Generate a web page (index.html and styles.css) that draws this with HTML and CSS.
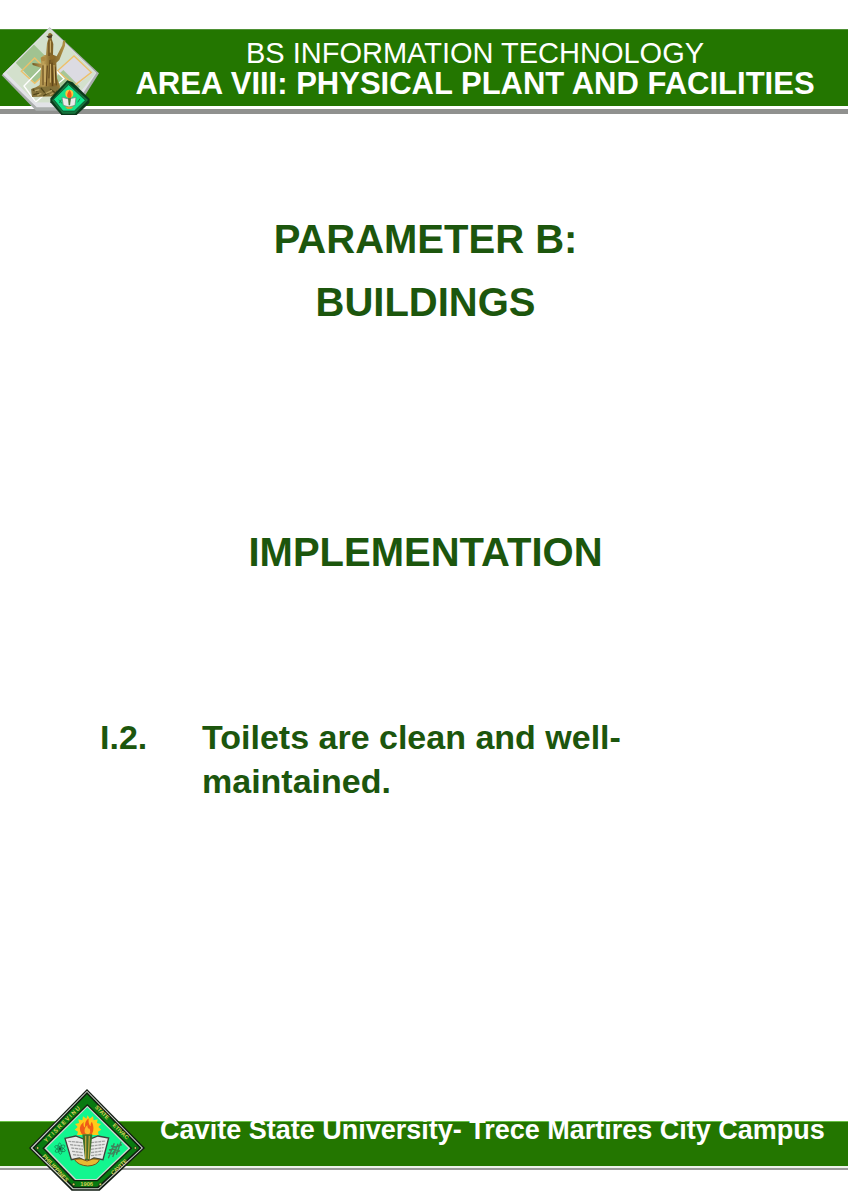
FILE: index.html
```html
<!DOCTYPE html>
<html lang="en">
<head>
<meta charset="utf-8">
<title>Area VIII: Physical Plant and Facilities</title>
<link rel="stylesheet" href="styles.css">
</head>
<body>
<div class="page">
<header class="header">
  <div class="header-band">
    <p class="program">BS INFORMATION TECHNOLOGY</p>
    <p class="area">AREA VIII: PHYSICAL PLANT AND FACILITIES</p>
  </div>
  <svg class="emblem" viewBox="0 0 330 300" role="img" aria-label="Campus monument emblem">
    <defs>
      <linearGradient id="bronze" x1="0" x2="1"><stop offset="0" stop-color="#6b521c"/><stop offset=".35" stop-color="#c0a259"/><stop offset=".6" stop-color="#7d6025"/><stop offset="1" stop-color="#b39449"/></linearGradient>
      <clipPath id="tile"><path d="M149 26 287 160 215 248H108L18 158Z"/></clipPath>
    </defs>
    <path d="M149 22 297 160 226 272H108L5 166Z" fill="#aaaead"/>
    <path d="M149 24 289 159 222 262H110L8 162Z" fill="#e2e3e7"/>
    <g clip-path="url(#tile)">
      <path d="M18 158 149 26 287 160 215 248H108Z" fill="#d3e0cc"/>
      <path d="M45 126 100 72 160 132 105 190Z" fill="#a1c391"/>
      <path d="M172 150 222 108 278 158 220 205Z" fill="#dcdbe2"/>
      <path d="M130 205 190 150 240 200 180 250Z" fill="#a6c696"/>
      <path d="M64 154 104 114 144 154 104 190ZM172 153 222 108 274 157 224 196Z" fill="none" stroke="#edc069" stroke-width="4"/>
      <path d="M72 198 142 126 192 176 107 246Z" fill="none" stroke="#fff" stroke-width="4"/>
    </g>
    <path d="M144 42 150 38 157 43 155 56 160 72 159 104 170 109 187 76 189 63 196 61 195 77 178 120 169 128 171 175 180 198 177 228 96 230 94 207 108 202 119 195 123 143 98 135 97 129 124 131 122 113 132 106 138 105 141 70 146 54Z" fill="url(#bronze)"/>
    <path d="M139 48 158 45 154 53 145 55Z" fill="#463b25"/>
    <path d="M147 61V108M129 136V196M142 137 139 199M156 128 158 199M165 140 169 196M150 120 147 175" stroke="#5b4119" stroke-width="3" fill="none"/>
    <path d="M135 133V186M151 132V188M162 135 164 190M151 62V98" stroke="#d8bb74" stroke-width="3" fill="none"/>
    <circle cx="130" cy="117" r="7" fill="#ad8a42"/><circle cx="156" cy="112" r="7" fill="#8f6b28"/>
    <path d="M95 208 120 200 170 199 178 205V228L96 230Z" fill="#85733a"/>
    <path d="M98 209 112 216M123 204 134 218M150 207 167 219M100 224 117 220M130 228 145 218M161 227 172 212" stroke="#51461a" stroke-width="4" fill="none"/>
    <path d="M104 213 118 209M138 220 156 211M112 226 124 220M150 225 160 219" stroke="#b9a565" stroke-width="4" fill="none"/>
    <path d="M202 181 218 187 269 237 268 249 230 285H184L151 247V235Z" fill="#0b3a1c"/>
    <path d="M203 187 264 240 225 281H188L156 241Z" fill="#16733b"/>
    <path d="M206 194 256 241 223 273H189L161 238Z" fill="#12e58b" stroke="#0b442a" stroke-width="2"/>
    <path d="M186 232 206 237 228 232 225 256 207 261 190 256Z" fill="#eceaea" stroke="#707a70" stroke-width="2"/>
    <circle cx="208" cy="221" r="12" fill="#ffc13b"/><path d="M203 233Q198 222 209 210 218 222 213 234Z" fill="#f0551c"/>
    <path d="M204 235H213L210 256H206Z" fill="#407638"/><path d="M195 260H221L213 267H202Z" fill="#d5a13a"/>
    <path d="M176 240 186 250M178 249 184 239M233 247 240 236" stroke="#1a8652" stroke-width="3"/>
  </svg>
</header>
<main class="content">
  <h1 class="title">PARAMETER B:<br>BUILDINGS</h1>
  <h2 class="section">IMPLEMENTATION</h2>
  <div class="item"><span class="item-number">I.2.</span><p class="item-text">Toilets are clean and well-maintained.</p></div>
</main>
<footer class="footer">
  <div class="footer-band"><p class="campus">Cavite State University- Trece Martires City Campus</p></div>
  <svg class="seal" viewBox="0 0 420 360" role="img" aria-label="Cavite State University seal">
    <path d="M201 27 375 204 239 332H155L27 204Z" fill="#111c12"/>
    <path d="M201 32 369 204 236 328H158L32 204Z" fill="#d1d6cf"/>
    <path d="M201 36 365 204 235 325H160L37 204Z" fill="#10200f"/>
    <path d="M201 43 358 204 232 320H163L44 204Z" fill="#087a10"/>
    <path d="M202 72 337 205 233 304H162L67 205Z" fill="#10200f"/>
    <path d="M202 77 331 205 231 300H165L73 205Z" fill="#d1d6cf"/>
    <path d="M202 82 325 205 229 297H168L79 205Z" fill="#12f68f"/>
    <g class="seal-letters">
      <text x="130" y="137" transform="rotate(-45 130 137)">Y T I S R E V I N U</text>
      <text x="242" y="101" transform="rotate(45 242 101)">STATE</text>
      <text x="298" y="158" transform="rotate(45 298 158)">ETIVAC</text>
      <text x="301" y="265" transform="rotate(-43 301 265)">CAVITE</text>
      <text x="102" y="268" transform="rotate(47 102 268)">PHILIPPINES</text>
      <text x="200" y="318">1906</text>
    </g>
    <path d="M203 106 209 116 219 109 221 121 233 118 231 129 243 132 235 141 244 149 234 155 236 165H171L174 155 164 149 173 141 165 132 177 129 175 118 187 121 189 109 199 116Z" fill="#ffcb18"/>
    <path d="M185 162Q172 141 191 126 189 140 195 142 193 124 206 115 204 133 212 139 211 128 216 126 225 146 216 162Z" fill="#ef5b18"/>
    <path d="M195 160Q190 147 202 135 202 147 209 146 213 154 207 164Z" fill="#ffb82a"/>
    <path d="M135 175 167 168 201 181 234 168 266 174 249 239 222 234 201 245 178 234 154 239Z" fill="#e9e9e8" stroke="#3b433a" stroke-width="4"/>
    <path d="M145 184 190 188M150 194 189 198M154 204 189 208M156 214 189 218M159 224 189 227M213 188 257 183M213 198 254 193M213 208 251 203M213 218 248 213M213 227 245 223" stroke="#a0a1a0" stroke-width="4" stroke-dasharray="9 2"/>
    <path d="M187 163H217L209 240H195Z" fill="#416d28"/><path d="M197 167V236M208 167 205 237" stroke="#bda53c" stroke-width="4"/>
    <path d="M163 238Q184 233 201 243 218 233 239 238 232 257 203 258 174 256 163 238Z" fill="#e6b932" stroke="#795218" stroke-width="3"/>
    <g fill="none" stroke="#17764c" stroke-width="2"><ellipse cx="120" cy="206" rx="17" ry="6" transform="rotate(25 120 206)"/><ellipse cx="120" cy="206" rx="17" ry="6" transform="rotate(85 120 206)"/><ellipse cx="120" cy="206" rx="17" ry="6" transform="rotate(145 120 206)"/></g>
    <circle cx="120" cy="206" r="4" fill="#184c36"/>
    <path d="M265 235 283 190M278 231 294 191M289 224 303 185M263 219 276 222 285 211M267 210 278 207 294 211M273 198 287 201 306 194M287 218 300 212" stroke="#41815b" stroke-width="4" fill="none"/>
    <g fill="#d5cf5e" stroke="#102612" stroke-width="2"><circle cx="53" cy="204" r="4"/><circle cx="346" cy="204" r="4"/><circle cx="161" cy="313" r="4"/><circle cx="241" cy="313" r="4"/></g>
  </svg>
</footer>
</div>
</body>
</html>
```
FILE: styles.css
```css
* { box-sizing: border-box; }
body { margin: 0; background: #fff; font-family: "Liberation Sans", Arial, sans-serif; }
p, h1, h2 { margin: 0; }
.page { display: flex; flex-direction: column; min-height: 100vh; }
.header { position: relative; padding-top: 29px; }
.header-band {
  padding: 8px 0 6px 102px;
  background: #237600;
  border-top: 1px solid #4f9136;
  color: #fff;
  text-align: center;
  box-shadow: 0 3px 0 #fff, 0 8px 0 #90918f;
}
.program { font-size: 29px; line-height: 30px; }
.area { font-size: 31px; line-height: 32px; font-weight: bold; }
.emblem { position: absolute; top: 20px; left: 0; width: 110px; height: 100px; }
.content { flex: 1; padding: 102px 97px 0 100px; color: #1c560d; font-weight: bold; }
.title, .section { font-size: 40px; line-height: 63px; text-align: center; }
.section { margin-top: 187px; }
.item { display: grid; grid-template-columns: 102px 1fr; margin-top: 131px; font-size: 34px; line-height: 44px; }
.item-text { max-width: 480px; }
.footer { position: relative; padding-bottom: 34px; }
.footer-band {
  height: 45px;
  padding-left: 137px;
  background: #237600;
  border-top: 1px solid #68c044;
  text-align: center;
  box-shadow: 0 2px 0 #eef2ec, 0 4px 0 #9a9a9a;
}
.campus { margin-top: -7px; color: #fff; font-size: 27px; line-height: 30px; font-weight: bold; }
.seal { position: absolute; left: 20px; bottom: 0; width: 140px; height: 120px; }
.seal-letters { fill: #d9cf5b; font-size: 17px; font-weight: bold; text-anchor: middle; }
```
